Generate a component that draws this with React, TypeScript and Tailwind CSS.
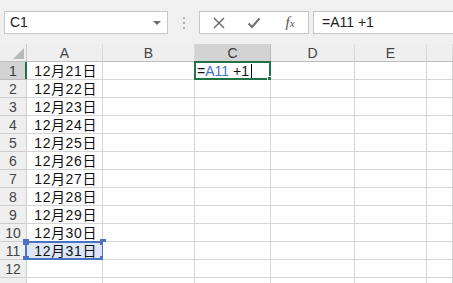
import React from 'react';

const cols = [
	{ key: 'A', w: 'w-[76px]' },
	{ key: 'B', w: 'w-[92px]' },
	{ key: 'C', w: 'w-[76px]' },
	{ key: 'D', w: 'w-[84px]' },
	{ key: 'E', w: 'w-[72px]' },
	{ key: 'F', w: 'flex-1' },
];

const rows = Array.from({ length: 13 }, (_, i) => i + 1);

function FormulaBar() {
	return (
		<div className="flex h-[44px] items-start bg-[#f0f0f0] pt-[11px]">
			<div className="ml-[4px] flex h-[23px] w-[164px] items-center justify-between border border-[#c6c6c6] bg-white pl-[5px] pr-[6px]">
				<span className="text-[14px] text-[#222]">C1</span>
				<div className="h-0 w-0 border-x-[4px] border-t-[4px] border-x-transparent border-t-[#6b6b6b]" />
			</div>
			<div className="flex w-[31px] flex-col items-center justify-center gap-[3px] pt-[6px]">
				<div className="h-[2px] w-[2px] bg-[#b0b0b0]" />
				<div className="h-[2px] w-[2px] bg-[#b0b0b0]" />
				<div className="h-[2px] w-[2px] bg-[#b0b0b0]" />
			</div>
			<div className="flex h-[23px] w-[110px] items-center border border-[#c6c6c6] bg-white">
				<div className="flex w-[36px] justify-center pl-[2px]">
					<svg width="12" height="12" viewBox="0 0 12 12">
						<path d="M1 1 L11 11 M11 1 L1 11" stroke="#666" strokeWidth="1.4" fill="none" />
					</svg>
				</div>
				<div className="flex w-[36px] justify-center">
					<svg width="14" height="12" viewBox="0 0 14 12">
						<path d="M1.5 6.5 L5 10 L12.5 1.5" stroke="#707070" strokeWidth="2" fill="none" />
					</svg>
				</div>
				<div className="flex w-[36px] justify-center">
					<span className="text-[15px] italic leading-none text-[#555] [font-family:'Liberation_Serif',serif]">
						f<span className="text-[11px]">x</span>
					</span>
				</div>
			</div>
			<div className="ml-[4px] flex h-[23px] flex-1 items-center border-y border-l border-[#c6c6c6] bg-white pl-[8px]">
				<span className="text-[14px] text-[#222]">=A11 +1</span>
			</div>
		</div>
	);
}

function HeaderRow() {
	return (
		<div className="flex h-[18px] border-b border-[#bfbfbf] bg-[#efefef]">
			<div className="relative w-[27px] border-r border-[#c8c8c8]">
				<div className="absolute bottom-[2px] right-[2px] h-0 w-0 border-b-[11px] border-l-[11px] border-b-[#b9b9b9] border-l-transparent" />
			</div>
			{cols.map((c) => (
				<div
					key={c.key}
					className={`${c.w} flex items-center justify-center border-r text-[14px] leading-none ${
						c.key === 'C' ? 'border-[#bdbdbd] bg-[#d3d3d3] text-[#3a3a3a]' : 'border-[#dadada] text-[#444]'
					}`}
				>
					{c.key === 'F' ? '' : c.key}
				</div>
			))}
		</div>
	);
}

function Cell({ row, col }: { row: number; col: string }) {
	const isDate = col === 'A' && row <= 11;
	const ref = col === 'A' && row === 11;
	const active = col === 'C' && row === 1;
	return (
		<div
			className={`relative flex items-center justify-end border-b border-r border-[#d6d6d6] pr-[5px] ${
				ref ? 'bg-[#dce6f4]' : 'bg-white'
			} ${cols.find((c) => c.key === col)!.w}`}
		>
			{isDate && (
				<span className="whitespace-nowrap text-[14px] leading-none tracking-[0.6px] text-[#111] [font-family:'Liberation_Sans','Noto_Sans_CJK_JP',sans-serif]">
					{`12月${20 + row}日`}
				</span>
			)}
			{ref && (
				<div className="absolute -left-[2px] -top-[1px] bottom-[-1px] right-[-2px] border-2 border-[#4a72c0]">
					<div className="absolute -left-[4px] -top-[4px] h-[6px] w-[6px] bg-[#4a72c0]" />
					<div className="absolute -right-[4px] -top-[4px] h-[6px] w-[6px] bg-[#4a72c0]" />
					<div className="absolute -bottom-[4px] -left-[4px] h-[6px] w-[6px] bg-[#4a72c0]" />
					<div className="absolute -bottom-[4px] -right-[4px] h-[6px] w-[6px] bg-[#4a72c0]" />
				</div>
			)}
			{active && (
				<div className="absolute -left-[1px] -top-[1px] bottom-[-1px] right-[-1px] flex items-center border-2 border-[#217346] pl-[1px]">
					<span className="text-[14px] leading-none text-[#111]">
						=<span className="text-[#4472c4]">A11</span> +1
					</span>
					<div className="ml-[2px] h-[14px] w-[1px] bg-black" />
					<div className="absolute -bottom-[4px] -right-[4px] h-[6px] w-[6px] border border-white bg-[#217346]" />
				</div>
			)}
		</div>
	);
}

export default function App() {
	return (
		<div className="h-[283px] w-[453px] overflow-hidden bg-white [font-family:'Liberation_Sans',Arial,sans-serif]">
			<FormulaBar />
			<HeaderRow />
			{rows.map((r) => (
				<div key={r} className="flex h-[18px]">
					<div
						className={`relative flex w-[27px] items-center justify-center border-b border-r text-[14px] leading-none ${
							r === 1 ? 'border-[#bdbdbd] bg-[#d3d3d3] text-[#3a3a3a]' : 'border-[#cdcdcd] bg-[#efefef] text-[#444]'
						}`}
					>
						{r <= 12 ? r : ''}
						{r === 1 && <div className="absolute -right-[1px] top-0 bottom-0 w-[2px] bg-[#217346]" />}
					</div>
					{cols.map((c) => (
						<Cell key={c.key} row={r} col={c.key} />
					))}
				</div>
			))}
		</div>
	);
}
